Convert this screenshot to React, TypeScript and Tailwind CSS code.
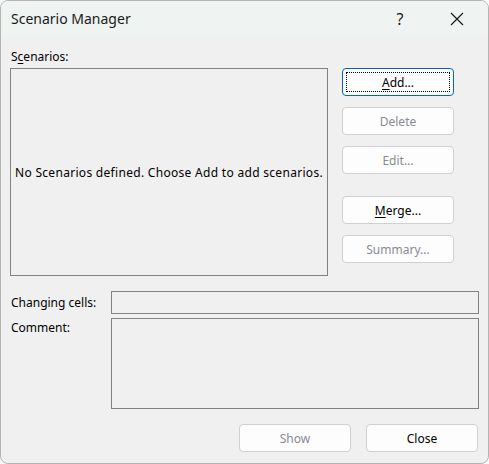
import React from "react";

const font = { fontFamily: '"Noto Sans", "Open Sans", sans-serif' };

function Btn({
  children,
  disabled,
  focused,
  className = "",
}: {
  children: React.ReactNode;
  disabled?: boolean;
  focused?: boolean;
  className?: string;
}) {
  return (
    <div
      className={
        "relative w-[112px] h-[28px] rounded-[4px] border flex items-center justify-center pt-[2px] text-[12px] leading-none bg-[#fdfdfd] " +
        (focused ? "border-[#0067c0] " : "border-[#d0d0d0] ") +
        (disabled ? "text-[#8a8a94] " : "text-black ") +
        className
      }
    >
      {focused && (
        <div className="absolute left-[3px] top-[3px] right-[3px] bottom-[3px] border border-dotted border-black" />
      )}
      <span className="relative">{children}</span>
    </div>
  );
}

export default function App() {
  return (
    <div className="w-[489px] h-[464px] bg-[#fafafa]" style={font}>
      <div className="w-[489px] h-[464px] rounded-[8px] border border-[#b4b4b4] overflow-hidden bg-[#f0f0f0] flex flex-col text-[12px] text-black">
        {/* title bar */}
        <div className="h-[36px] bg-[#eff4f2] flex items-center shrink-0">
          <div className="pl-[10px] text-[14px] leading-none text-[#1a1a1a] flex-1">Scenario Manager</div>
          <div className="w-[20px] text-center text-[16px] leading-none text-[#1a1a1a] mr-[40px]">?</div>
          <svg width="14" height="14" viewBox="0 0 14 14" className="mr-[24px]">
            <path d="M1 1 L13 13 M13 1 L1 13" stroke="#1a1a1a" strokeWidth="1.2" fill="none" />
          </svg>
        </div>
        {/* body */}
        <div className="flex flex-col">
          <div className="pl-[10px] mt-[12px] h-[16px] leading-[16px]">
            S<span className="underline underline-offset-2">c</span>enarios:
          </div>
          <div className="flex mt-[3px] pl-[9px]">
            <div className="w-[318px] h-[208px] border border-[#828282] flex items-center justify-center pt-[2px]">
              <span className="tracking-[0.3px]">No Scenarios defined. Choose Add to add scenarios.</span>
            </div>
            <div className="ml-[14px] flex flex-col">
              <Btn focused>
                <span className="underline underline-offset-2">A</span>dd...
              </Btn>
              <Btn disabled className="mt-[11px]">Delete</Btn>
              <Btn disabled className="mt-[11px]">Edit...</Btn>
              <Btn className="mt-[22px]">
                <span className="underline underline-offset-2">M</span>erge...
              </Btn>
              <Btn disabled className="mt-[11px]">Summary...</Btn>
            </div>
          </div>
          <div className="flex items-center mt-[15px]">
            <div className="w-[110px] pl-[10px]">Changing cells:</div>
            <div className="w-[368px] h-[23px] border border-[#828282]" />
          </div>
          <div className="flex mt-[4px]">
            <div className="w-[110px] pl-[10px] pt-[1px]">Comment:</div>
            <div className="w-[368px] h-[91px] border border-[#828282]" />
          </div>
          <div className="flex justify-end mt-[15px] pr-[10px] gap-[15px]">
            <Btn disabled>Show</Btn>
            <Btn>Close</Btn>
          </div>
        </div>
      </div>
    </div>
  );
}
